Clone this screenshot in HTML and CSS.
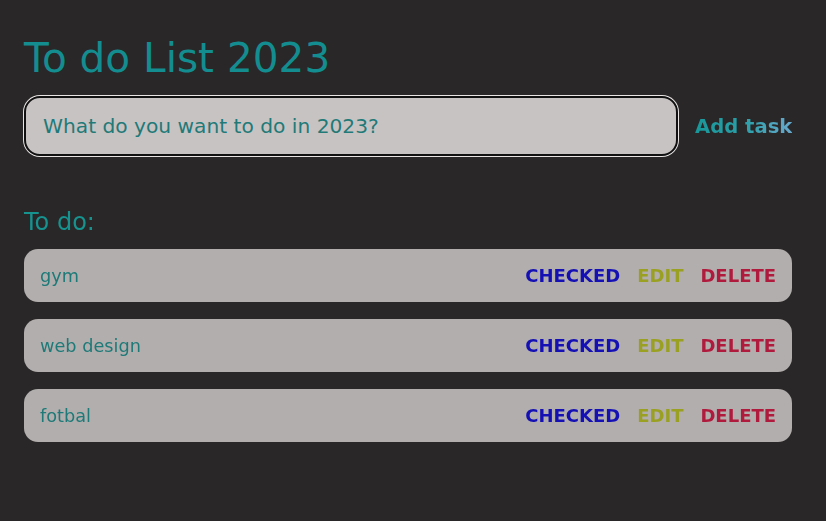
FILE: index.html
```html
<!DOCTYPE html>
<html>
<head>
<meta charset="utf-8">
<link rel="stylesheet" href="styles.css">
</head>
<body>
<main class="app">
  <h1 class="title">To do List 2023</h1>
  <form class="new-task">
    <input class="task-input" type="text" placeholder="What do you want to do in 2023?" autofocus>
    <button class="add-btn" type="button">Add task</button>
  </form>
  <h2 class="subtitle">To do:</h2>
  <ul class="tasks">
    <li class="task"><span class="task-name">gym</span><div class="actions"><button class="btn btn-check">CHECKED</button><button class="btn btn-edit">EDIT</button><button class="btn btn-delete">DELETE</button></div></li>
    <li class="task"><span class="task-name">web design</span><div class="actions"><button class="btn btn-check">CHECKED</button><button class="btn btn-edit">EDIT</button><button class="btn btn-delete">DELETE</button></div></li>
    <li class="task"><span class="task-name">fotbal</span><div class="actions"><button class="btn btn-check">CHECKED</button><button class="btn btn-edit">EDIT</button><button class="btn btn-delete">DELETE</button></div></li>
  </ul>
</main>
</body>
</html>
```
FILE: styles.css
```css
* { box-sizing: border-box; }
html, body { margin: 0; padding: 0; }
body {
  background: #292728;
  font-family: "DejaVu Sans", Verdana, sans-serif;
  height: 521px;
  overflow: hidden;
}
.app {
  width: 768px;
  margin-left: 24px;
  padding-top: 34px;
}
.title {
  margin: 0;
  font-weight: normal;
  font-size: 40.6px;
  line-height: 48px;
  color: #138d8f;
}
.new-task {
  display: flex;
  align-items: center;
  margin-top: 14px;
}
.task-input {
  flex: 0 0 654px;
  width: 654px;
  height: 60px;
  border-radius: 16px;
  border: 2px solid #111;
  box-shadow: 0 0 0 1px #e8e4e4;
  background: #c7c3c3;
  padding: 0 17px;
  font-family: "DejaVu Sans", Verdana, sans-serif;
  font-size: 20.2px;
  color: #1f7a78;
  outline: none;
  caret-color: #1f7a78;
}
.task-input::placeholder { color: #1f7a78; opacity: 1; }
.add-btn {
  margin-left: 17px;
  white-space: nowrap;
  flex: 0 0 auto;
  border: none;
  padding: 0;
  background: linear-gradient(90deg, #18989a 0%, #2a9fa8 50%, #68a8cc 100%);
  -webkit-background-clip: text;
  background-clip: text;
  color: transparent;
  font-family: "DejaVu Sans", Verdana, sans-serif;
  font-weight: bold;
  font-size: 19.6px;
}
.subtitle {
  margin: 51px 0 0;
  font-weight: normal;
  font-size: 24px;
  line-height: 30px;
  color: #16928f;
}
.tasks {
  list-style: none;
  margin: 12px 0 0;
  padding: 0;
  display: flex;
  flex-direction: column;
  gap: 17px;
}
.task {
  height: 53px;
  border-radius: 14px;
  background: #b2aeae;
  display: flex;
  align-items: center;
  justify-content: space-between;
  padding: 0 16px;
}
.task-name {
  font-size: 17.7px;
  color: #1e7a78;
}
.actions {
  display: flex;
  gap: 17px;
}
.btn {
  border: none;
  background: none;
  padding: 0;
  font-family: "DejaVu Sans", Verdana, sans-serif;
  font-weight: bold;
  font-size: 18px;
}
.btn-check { color: #1410b4; }
.btn-edit { color: #9aa022; }
.btn-delete { color: #b01a3c; }
```
